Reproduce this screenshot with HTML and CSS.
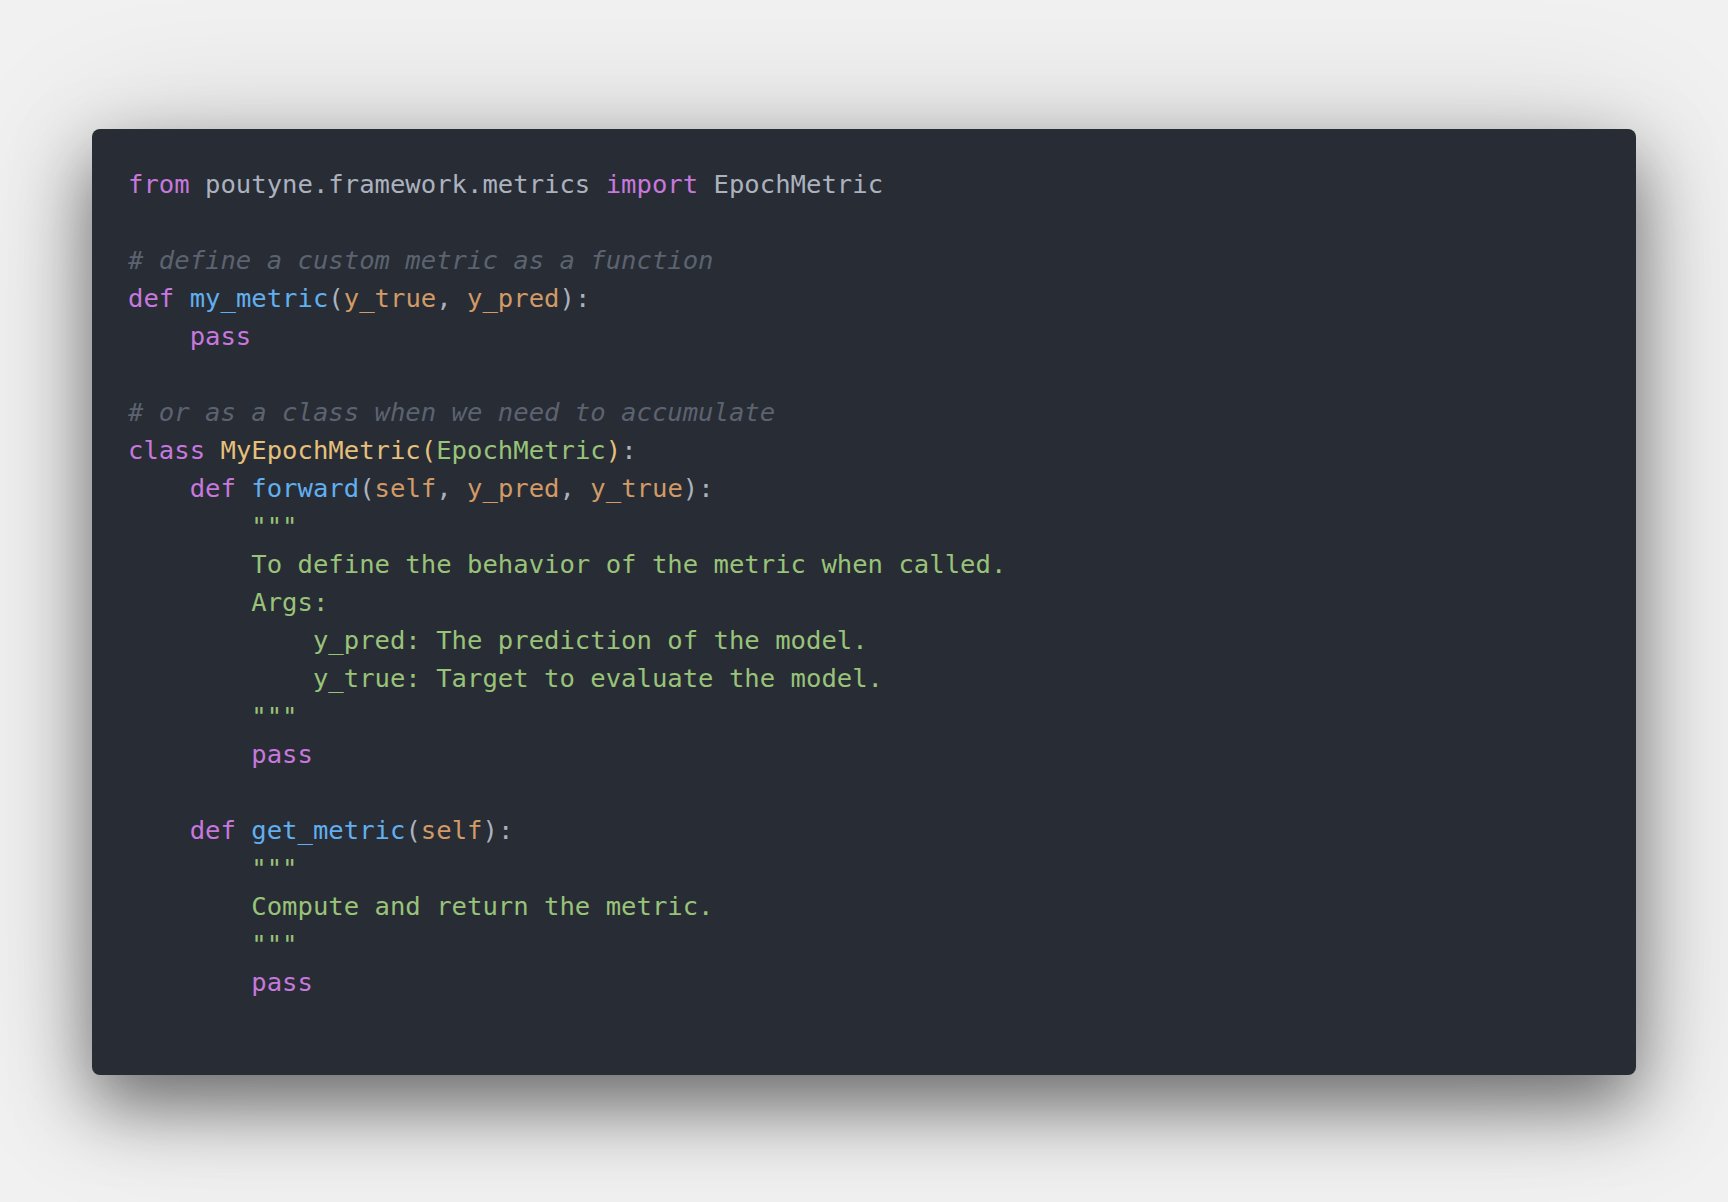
FILE: index.html
```html
<!DOCTYPE html>
<html lang="en">
<head>
<meta charset="utf-8">
<title>Code</title>
<link rel="stylesheet" href="styles.css">
</head>
<body>
<main class="stage">
<div class="window">
<div class="code">
<div class="ln"><span class="kw">from</span> poutyne.framework.metrics <span class="kw">import</span> EpochMetric</div>
<div class="ln"></div>
<div class="ln"><span class="cm"># define a custom metric as a function</span></div>
<div class="ln"><span class="kw">def</span> <span class="fn">my_metric</span><span class="pn">(</span><span class="pa">y_true</span>, <span class="pa">y_pred</span><span class="pn">)</span>:</div>
<div class="ln">    <span class="kw">pass</span></div>
<div class="ln"></div>
<div class="ln"><span class="cm"># or as a class when we need to accumulate</span></div>
<div class="ln"><span class="kw">class</span> <span class="cl">MyEpochMetric(</span><span class="st">EpochMetric</span><span class="cl">)</span>:</div>
<div class="ln">    <span class="kw">def</span> <span class="fn">forward</span><span class="pn">(</span><span class="pa">self</span>, <span class="pa">y_pred</span>, <span class="pa">y_true</span><span class="pn">)</span>:</div>
<div class="ln st">        """</div>
<div class="ln st">        To define the behavior of the metric when called.</div>
<div class="ln st">        Args:</div>
<div class="ln st">            y_pred: The prediction of the model.</div>
<div class="ln st">            y_true: Target to evaluate the model.</div>
<div class="ln st">        """</div>
<div class="ln">        <span class="kw">pass</span></div>
<div class="ln"></div>
<div class="ln">    <span class="kw">def</span> <span class="fn">get_metric</span><span class="pn">(</span><span class="pa">self</span><span class="pn">)</span>:</div>
<div class="ln st">        """</div>
<div class="ln st">        Compute and return the metric.</div>
<div class="ln st">        """</div>
<div class="ln">        <span class="kw">pass</span></div>
<div class="ln"></div>
</div>
</div>
</main>
</body>
</html>
```

FILE: styles.css
```css
html, body {
  margin: 0;
  padding: 0;
}

body {
  background: #f1f1f1;
  width: 1728px;
  height: 1202px;
  overflow: hidden;
}

.stage {
  padding: 129px 92px 0 92px;
}

.window {
  background: #282c34;
  border-radius: 8px;
  box-shadow: 0 30px 70px rgba(0, 0, 0, 0.5), 0 10px 150px rgba(0, 0, 0, 0.16);
  padding: 36px;
}

.code {
  display: flex;
  flex-direction: column;
  font-family: "DejaVu Sans Mono", "Liberation Mono", monospace;
  font-size: 25.6px;
  color: #abb2bf;
}

.ln {
  height: 38px;
  line-height: 38px;
  white-space: pre;
}

.kw { color: #c678dd; }
.fn { color: #61afef; }
.pa { color: #d19a66; }
.pn { color: #abb2bf; }
.cm { color: #5c6370; font-style: italic; }
.st { color: #98c379; }
.cl { color: #e5c07b; }
```
